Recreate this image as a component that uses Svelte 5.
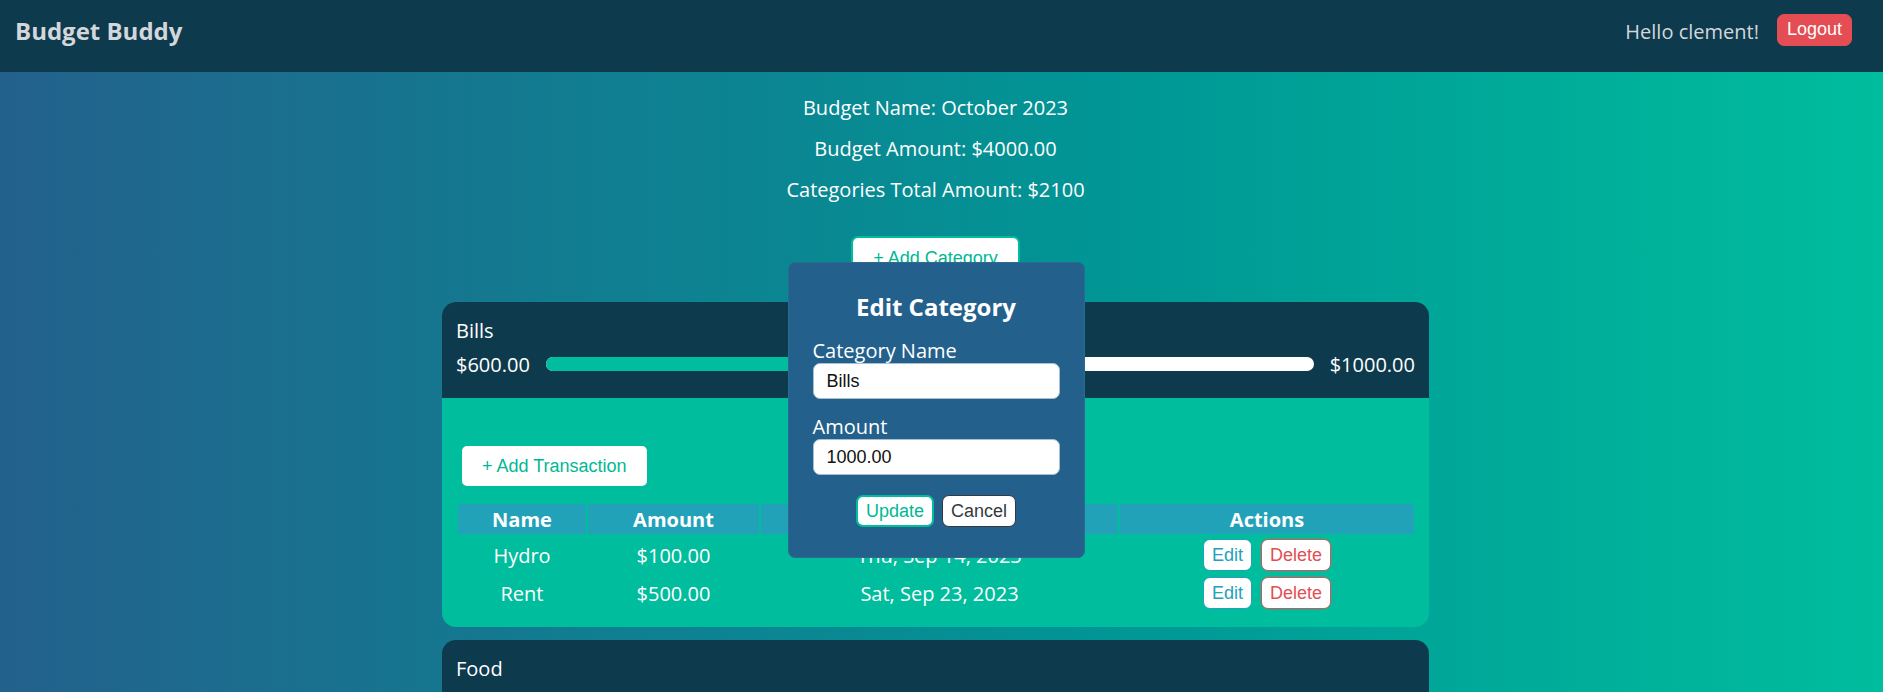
<script>
  let name = $state('Bills');
  let amount = $state('1000.00');

  const spent = 600;
  const limit = 1000;

  const transactions = [
    { name: 'Hydro', amount: '$100.00', date: 'Thu, Sep 14, 2023' },
    { name: 'Rent', amount: '$500.00', date: 'Sat, Sep 23, 2023' }
  ];
</script>

<div class="page">
  <header class="topbar">
    <h1>Budget Buddy</h1>
    <div class="user">
      <span>Hello clement!</span>
      <button class="btn logout" type="button">Logout</button>
    </div>
  </header>

  <main>
    <section class="summary">
      <p>Budget Name: October 2023</p>
      <p>Budget Amount: $4000.00</p>
      <p>Categories Total Amount: $2100</p>
      <button class="btn add" type="button">+ Add Category</button>
    </section>

    <section class="card">
      <div class="card-head">
        <h2>Bills</h2>
        <div class="progress-row">
          <span>$600.00</span>
          <div class="track">
            <div class="fill" style="width: {(spent / limit) * 100}%"></div>
          </div>
          <span>$1000.00</span>
        </div>
      </div>
      <div class="card-body">
        <button class="btn add" type="button">+ Add Transaction</button>
        <table>
          <colgroup>
            <col class="c-name" />
            <col class="c-amount" />
            <col class="c-date" />
            <col />
          </colgroup>
          <thead>
            <tr><th>Name</th><th>Amount</th><th aria-label="Date"></th><th>Actions</th></tr>
          </thead>
          <tbody>
            {#each transactions as t}
              <tr>
                <td>{t.name}</td>
                <td>{t.amount}</td>
                <td>{t.date}</td>
                <td>
                  <div class="actions">
                    <button class="btn edit" type="button">Edit</button>
                    <button class="btn delete" type="button">Delete</button>
                  </div>
                </td>
              </tr>
            {/each}
          </tbody>
        </table>
      </div>
    </section>

    <section class="card">
      <div class="card-head">
        <h2>Food</h2>
      </div>
    </section>

    <form class="modal" onsubmit={(e) => e.preventDefault()}>
      <h2>Edit Category</h2>
      <label for="category-name">Category Name</label>
      <input id="category-name" type="text" bind:value={name} />
      <label for="category-amount">Amount</label>
      <input id="category-amount" type="text" bind:value={amount} />
      <div class="modal-actions">
        <button class="btn update" type="submit">Update</button>
        <button class="btn cancel" type="button">Cancel</button>
      </div>
    </form>
  </main>
</div>

<style>
  :global(body) {
    margin: 0;
  }

  .page {
    height: 100vh;
    overflow: hidden;
    box-sizing: border-box;
    color: #fff;
    font: 20px/30px 'Open Sans', 'Noto Sans', sans-serif;
    background: linear-gradient(to right, #23618c, #009795 60%, #00bd9d);
  }

  .page * {
    box-sizing: border-box;
  }

  h1,
  h2,
  p {
    margin: 0;
  }

  .topbar {
    display: flex;
    justify-content: space-between;
    align-items: flex-start;
    height: 72px;
    padding: 14px 31px 0 15px;
    color: #d3d7db;
    background: #0e3a4d;
  }

  h1 {
    font-size: 24px;
    line-height: 34px;
  }

  .user {
    display: flex;
    gap: 18px;
    line-height: 36px;
  }

  .btn {
    height: 32px;
    padding: 0 8px;
    border: 1px solid;
    border-radius: 7px;
    font: 18px/20px 'Liberation Sans', Arial, sans-serif;
    background: #fff;
    cursor: pointer;
  }

  .logout {
    padding: 0 9px 2px;
    color: #fff;
    border-color: #e34d53;
    background: #e34d53;
  }

  main {
    position: relative;
    display: flex;
    flex-direction: column;
    align-items: center;
    margin-right: 12px;
    padding-top: 21px;
  }

  .summary {
    display: flex;
    flex-direction: column;
    align-items: center;
    gap: 11px;
    margin-bottom: 22px;
  }

  .add {
    height: 44px;
    padding: 0 20px 1px;
    color: #00b894;
    border: 2px solid #00bd9d;
  }

  .summary .add {
    margin-top: 20px;
  }

  .card {
    width: 100%;
    max-width: 987px;
    margin-bottom: 13px;
    border-radius: 14px;
    overflow: hidden;
    background: #00bd9d;
  }

  .card-head {
    height: 96px;
    padding: 12px 14px;
    background: #0e3a4d;
  }

  .card-head h2 {
    margin-bottom: 2px;
    font-size: 20px;
    font-weight: 400;
    line-height: 34px;
  }

  .progress-row {
    display: flex;
    align-items: center;
    gap: 16px;
  }

  .track {
    flex: 1;
    height: 14px;
    margin-bottom: 2px;
    border-radius: 7px;
    overflow: hidden;
    background: #fff;
  }

  .fill {
    height: 100%;
    background: #00bd9d;
  }

  .card-body {
    padding: 46px 13px 15px 14px;
  }

  .card-body .add {
    display: block;
    margin: 0 4px 14px;
  }

  table {
    width: 100%;
    table-layout: fixed;
    border-spacing: 2px;
    text-align: center;
  }

  .c-name {
    width: 128px;
  }

  .c-amount {
    width: 171px;
  }

  .c-date {
    width: 357px;
  }

  th {
    height: 30px;
    padding: 2px 0 0;
    line-height: 28px;
    background: #22a2b9;
  }

  td {
    height: 36px;
    padding: 3px 0 0;
  }

  .actions {
    display: flex;
    justify-content: center;
    gap: 9px;
    padding-bottom: 1px;
  }

  .edit {
    color: #22a2b9;
  }

  .delete {
    color: #e34d53;
  }

  .modal {
    position: absolute;
    top: 190px;
    left: 50%;
    display: flex;
    flex-direction: column;
    width: 297px;
    margin-left: -148px;
    padding: 27px 24px 30px;
    border: 1px solid #2b6a91;
    border-radius: 7px;
    background: #23618c;
  }

  .modal h2 {
    margin-bottom: 13px;
    font-size: 24px;
    line-height: 34px;
    text-align: center;
  }

  .modal label {
    padding-top: 2px;
    line-height: 24px;
  }

  .modal input {
    width: 100%;
    height: 36px;
    margin-bottom: 14px;
    padding: 0 13px;
    border: 1px solid #a9c0d3;
    border-radius: 7px;
    color: #111;
    font: 18px/20px 'Liberation Sans', Arial, sans-serif;
    background: #fff;
  }

  .modal-actions {
    display: flex;
    justify-content: center;
    gap: 8px;
    margin-top: 6px;
  }

  .update {
    color: #00b894;
    border: 2px solid #00bd9d;
  }

  .cancel {
    color: #343a40;
  }
</style>
